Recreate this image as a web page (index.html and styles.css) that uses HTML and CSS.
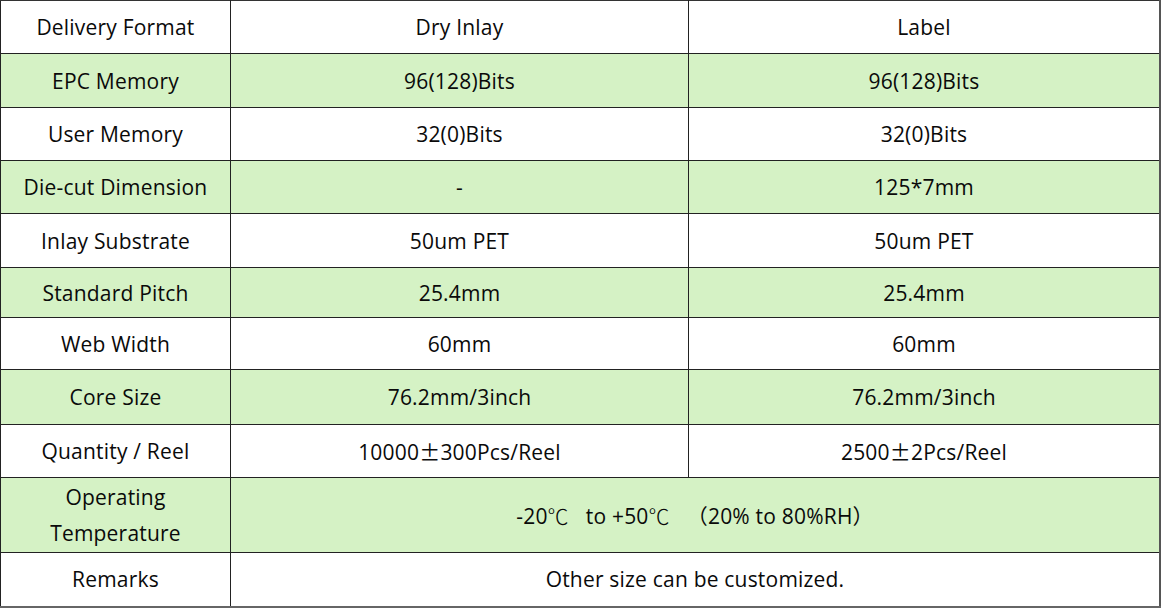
FILE: index.html
```html
<!DOCTYPE html>
<html>
<head>
<meta charset="utf-8">
<link rel="stylesheet" href="styles.css">
</head>
<body>
<table class="spec">
  <colgroup>
    <col class="c1"><col class="c2"><col class="c3">
  </colgroup>
  <tr class="r-white h53"><td>Delivery Format</td><td>Dry Inlay</td><td>Label</td></tr>
  <tr class="r-green h54"><td>EPC Memory</td><td>96(128)Bits</td><td>96(128)Bits</td></tr>
  <tr class="r-white h53"><td>User Memory</td><td>32(0)Bits</td><td>32(0)Bits</td></tr>
  <tr class="r-green h53"><td>Die-cut Dimension</td><td>-</td><td>125*7mm</td></tr>
  <tr class="r-white h54"><td>Inlay Substrate</td><td>50um PET</td><td>50um PET</td></tr>
  <tr class="r-green h49"><td>Standard Pitch</td><td>25.4mm</td><td>25.4mm</td></tr>
  <tr class="r-white h52"><td>Web Width</td><td>60mm</td><td>60mm</td></tr>
  <tr class="r-green h55"><td>Core Size</td><td>76.2mm/3inch</td><td>76.2mm/3inch</td></tr>
  <tr class="r-white h53"><td>Quantity / Reel</td><td>10000<span class="cjk">±</span>300Pcs/Reel</td><td>2500<span class="cjk">±</span>2Pcs/Reel</td></tr>
  <tr class="r-green h75"><td class="two">Operating<br>Temperature</td><td colspan="2">-20<span class="deg">℃</span>&nbsp;&nbsp; to +50<span class="deg">℃</span>&nbsp;&nbsp; <span class="cjk">（</span>20% to 80%RH<span class="cjk">）</span></td></tr>
  <tr class="r-white h54"><td>Remarks</td><td colspan="2">Other size can be customized.</td></tr>
</table>
</body>
</html>
```
FILE: styles.css
```css
html, body {
  margin: 0;
  padding: 0;
  background: #ffffff;
}
.spec {
  border-collapse: collapse;
  width: 1161px;
  table-layout: fixed;
  font-family: "Open Sans", "Noto Sans CJK SC", sans-serif;
  font-size: 21px;
  letter-spacing: 0.2px;
  color: #0a0a0a;
  border-left: 1px solid #aaa;
  border-right: 2px solid #555;
  border-bottom: 2px solid #666;
}
.c1 { width: 230px; }
.c2 { width: 458px; }
.c3 { width: auto; }
.spec td {
  border: 1px solid #222;
  text-align: center;
  vertical-align: middle;
  padding: 0;
  line-height: 26px;
}
.spec tr:first-child td { border-top: 1px solid #333; }
.r-green td { background: #d5f2c5; }
.r-white td { background: #ffffff; }
.h49 { height: 50px; }
.h52 { height: 52px; }
.h53 { height: 53px; }
.h54 { height: 54px; }
.h55 { height: 55px; }
.h75 { height: 75px; }
.spec td.two { line-height: 36px; }
.cjk { font-family: "Noto Sans CJK SC", sans-serif; }
.deg { font-family: "Noto Sans CJK SC", serif; font-weight: 300; }
```
